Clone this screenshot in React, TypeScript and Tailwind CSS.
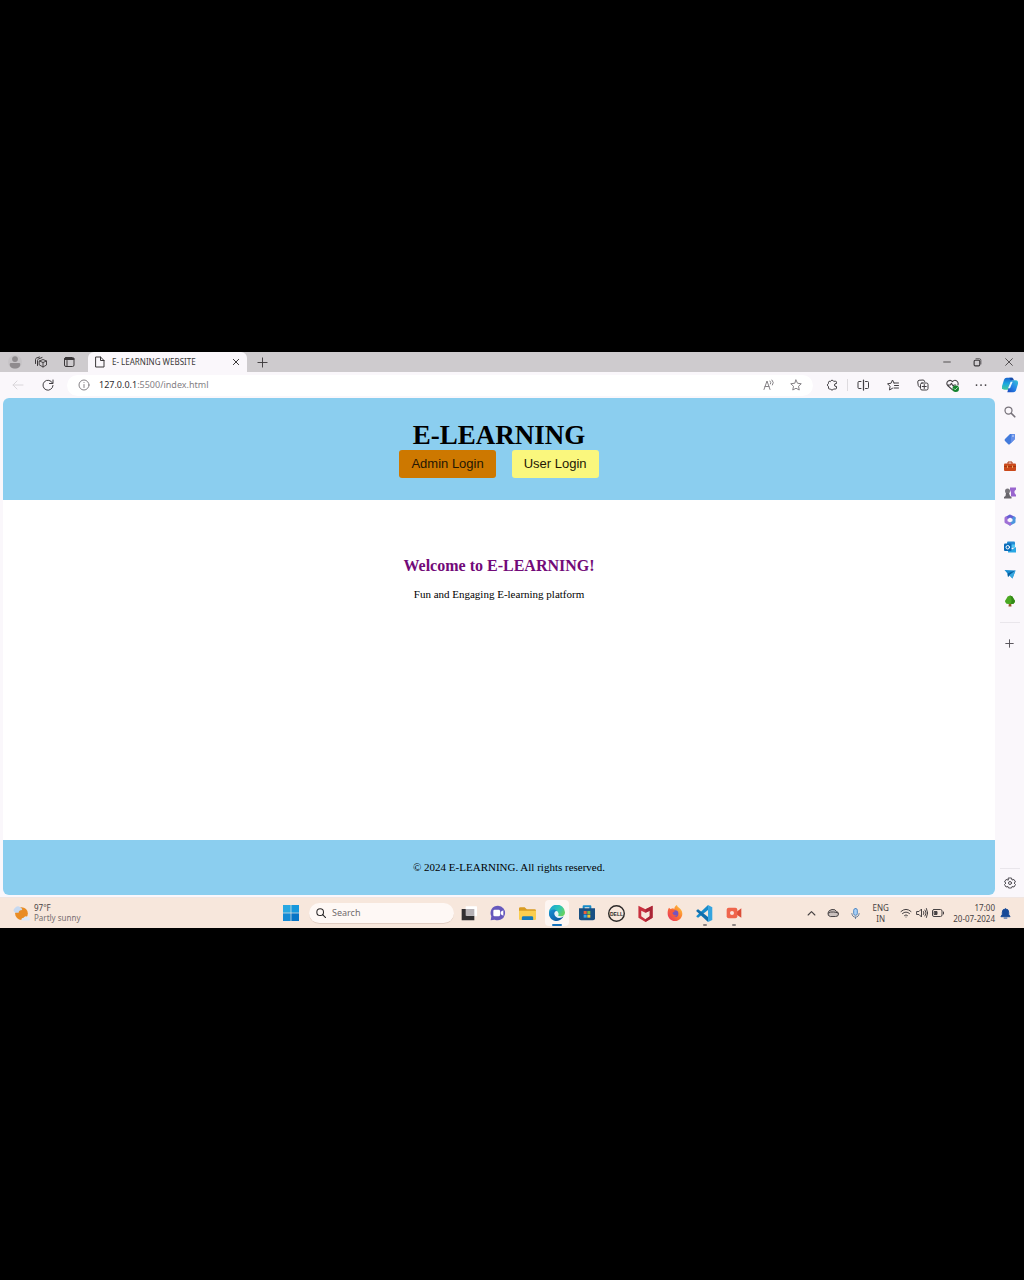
import type { ReactNode } from 'react';

type GlyphProps = { children: ReactNode; className?: string; box?: string };

function Glyph({ children, className = 'size-3', box = '0 0 24 24' }: GlyphProps) {
  return (
    <svg
      aria-hidden="true"
      viewBox={box}
      className={`shrink-0 ${className}`}
      fill="none"
      stroke="currentColor"
      strokeWidth="2"
      strokeLinecap="round"
      strokeLinejoin="round"
    >
      {children}
    </svg>
  );
}

function IconButton({ label, className = '', children }: { label: string; className?: string; children: ReactNode }) {
  return (
    <button type="button" aria-label={label} className={`flex shrink-0 items-center justify-center ${className}`}>
      {children}
    </button>
  );
}

function TabStrip() {
  return (
    <div className="flex h-5 items-stretch bg-[#cecbce] text-[#3a3739]">
      <div className="flex w-[88px] shrink-0 items-center pl-2">
        <IconButton label="Profile" className="w-[14px]">
          <Glyph className="size-[14px]">
            <g fill="#8f8b8e" stroke="none">
              <circle cx="12" cy="12" r="12" fill="#c6c3c6" />
              <circle cx="12" cy="7" r="5" />
              <path d="M3 15.500q0-2 2-2h14q2 0 2 2v1c0 4-4 6.500-9 6.500s-9-2.500-9-6.500z" />
            </g>
          </Glyph>
        </IconButton>
        <IconButton label="Workspaces" className="ml-3 w-[14px]">
          <Glyph>
            <path d="M9 10l7-3 7 3v8l-7 4-7-4zM9 10l7 3 7-3M16 13v9" strokeWidth="1.800" />
            <path d="M5 19V9q0-2 2-3l7-3M1 15V7q0-2 2-3l6-2" />
          </Glyph>
        </IconButton>
        <IconButton label="Tab actions menu" className="ml-[14px] w-[14px]">
          <Glyph>
            <rect x="3" y="3" width="19" height="18" rx="3" />
            <path d="M4 6h17" strokeWidth="4" />
            <path d="M8 9v11" strokeWidth="2" />
          </Glyph>
        </IconButton>
      </div>
      <div className="flex w-[159px] shrink-0 items-center rounded-t-md bg-[#faf7fb] px-[6px]">
        <Glyph className="size-3">
          <path d="M4 2h9l7 7v13H4zM13 2v7h7" />
        </Glyph>
        <span className="ml-[6px] flex-1 whitespace-nowrap text-[8px] leading-3">E- LEARNING WEBSITE</span>
        <IconButton label="Close tab" className="w-[10px]">
          <Glyph className="size-[8px]">
            <path d="M4 4l16 16M20 4L4 20" strokeWidth="3" />
          </Glyph>
        </IconButton>
      </div>
      <IconButton label="New tab" className="ml-2 w-[14px]">
        <Glyph className="size-[11px]">
          <path d="M12 2v20M2 12h20" />
        </Glyph>
      </IconButton>
      <div className="ml-auto flex items-stretch">
        <IconButton label="Minimize" className="w-[30px]">
          <Glyph className="size-[10px]">
            <path d="M4 12h16" />
          </Glyph>
        </IconButton>
        <IconButton label="Restore" className="w-[31px]">
          <Glyph className="size-[9px]">
            <rect x="3" y="6" width="15" height="15" rx="3" strokeWidth="3" />
            <path d="M8 2h9q4 0 4 4v10" />
          </Glyph>
        </IconButton>
        <IconButton label="Close window" className="w-[31px]">
          <Glyph className="size-[10px]">
            <path d="M4 4l16 16M20 4L4 20" />
          </Glyph>
        </IconButton>
      </div>
    </div>
  );
}

function Toolbar() {
  return (
    <div className="flex h-[26px] items-center pl-[11px] text-[#413e42]">
      <IconButton label="Back" className="w-[14px] text-[#d9d6da]">
        <Glyph>
          <path d="M22 12H2M10 4l-8 8 8 8" />
        </Glyph>
      </IconButton>
      <IconButton label="Refresh" className="ml-4 w-[14px]">
        <Glyph>
          <path d="M21 8a10 10 0 1 0 1 5M22 2v7h-7" />
        </Glyph>
      </IconButton>
      <div className="ml-3 flex h-[21px] min-w-0 flex-1 items-center rounded-full bg-white pl-[11px] pr-[10px]">
        <Glyph className="size-3 text-[#858286]">
          <circle cx="12" cy="12" r="10" />
          <path d="M12 11v6M12 7v.1" />
        </Glyph>
        <a href="#page" className="ml-[9px] min-w-0 flex-1 whitespace-nowrap text-[9px] leading-3 text-[#838085]">
          <span className="text-[#2f2c31]">127.0.0.1</span>:5500/index.html
        </a>
        <IconButton label="Read aloud" className="w-[14px] text-[#858286]">
          <Glyph>
            <path d="M2 21L8 4l6 17M4 15h8" />
            <path d="M14 4q3 3 1 6M18 2q5 5 1 10" />
          </Glyph>
        </IconButton>
        <IconButton label="Add to favorites" className="ml-[13px] w-[14px] text-[#858286]">
          <Glyph>
            <path d="M12 2l3 6.500 7.500 1-5.500 5 1.500 7.500-6.500-3.500L5.500 22 7 14.500l-5.500-5 7.500-1z" />
          </Glyph>
        </IconButton>
      </div>
      <div className="ml-[11px] flex shrink-0 items-center">
        <IconButton label="Extensions" className="w-[15px]">
          <Glyph>
            <path d="M9 4.500a3.200 3.200 0 0 1 6 0h4q2 0 2 2V9h-1a3 3 0 0 0 0 6h1v3q0 2-2 2h-4a3.200 3.200 0 0 1-6 0H7q-2 0-2-2v-3a3.200 3.200 0 0 1 0-6V6.500q0-2 2-2z" />
          </Glyph>
        </IconButton>
        <span className="ml-2 h-3 w-px bg-[#dedbdf]" />
        <IconButton label="Split screen" className="w-[30px]">
          <Glyph>
            <path d="M8 5H4Q2 5 2 7v10q0 2 2 2h4M17 5h4q2 0 2 2v10q0 2-2 2h-4" />
            <path d="M13 2v20" strokeWidth="2.500" />
          </Glyph>
        </IconButton>
        <IconButton label="Favorites" className="w-[30px]">
          <Glyph>
            <path d="M14 8L11 2 8 8.500l-7 1 5 5L5 22l6-3.500M14 8h9M15 13h8M14 18h9" />
          </Glyph>
        </IconButton>
        <IconButton label="Collections" className="w-[30px]">
          <Glyph>
            <path d="M5 16q-2-.5-2.500-3L1.500 6Q1.500 3 4 2.500L12 2q3 0 3.500 3" />
            <rect x="7" y="8" width="15" height="14" rx="3" />
            <path d="M14.500 11v8M10.500 15h8" />
          </Glyph>
        </IconButton>
        <IconButton label="Browser essentials" className="w-[29px]">
          <Glyph className="size-[13px]">
            <path d="M12 20L3 12c-5-6 4-13 9-7 5-6 12 0 10 6M3 11h5l2-3 3 5 2-2h3" />
            <circle cx="18" cy="18" r="6" fill="#14832d" stroke="none" />
            <path d="M15 18l2 2 4-4" stroke="#d8f0db" strokeWidth="1.500" />
          </Glyph>
        </IconButton>
        <IconButton label="Settings and more" className="w-[28px]">
          <Glyph>
            <path d="M3 12h.1M12 12h.1M21 12h.1" strokeWidth="3.500" />
          </Glyph>
        </IconButton>
      </div>
    </div>
  );
}

function WebPage() {
  return (
    <div id="page" className="ml-[3px] flex flex-1 flex-col overflow-hidden rounded-md bg-white font-['Liberation_Serif',serif] text-[11px] leading-4 text-black">
      <header className="bg-[#8bceef] py-[22px] text-center">
        <h1 className="text-[27px] font-bold leading-[30px]">E-LEARNING</h1>
        <div className="flex justify-center gap-4 font-['Liberation_Sans',sans-serif] text-[13px] text-[#251704]">
          <button type="button" className="h-7 rounded-[3px] bg-[#cd7800] px-3">Admin Login</button>
          <button type="button" className="h-7 rounded-[3px] bg-[#faf77d] px-3">User Login</button>
        </div>
      </header>
      <main className="min-h-[340px] flex-1 pt-14 text-center">
        <h2 className="text-[16px] font-bold leading-5 text-[#720a79]">Welcome to E-LEARNING!</h2>
        <p className="mt-[10px]">Fun and Engaging E-learning platform</p>
      </main>
      <footer className="bg-[#8bceef] py-5 pl-5 text-center">
        <p className="leading-[15px]">© 2024 E-LEARNING. All rights reserved.</p>
      </footer>
    </div>
  );
}

function CopilotIcon() {
  return (
    <Glyph className="size-4">
      <defs>
        <linearGradient id="cp-a" x1="0" y1="0" x2="0" y2="1">
          <stop stopColor="#1b62cf" />
          <stop offset="0.500" stopColor="#1aa8e0" />
          <stop offset="1" stopColor="#45c99b" />
        </linearGradient>
        <linearGradient id="cp-b" x1="1" y1="0" x2="0" y2="1">
          <stop stopColor="#37c8d5" />
          <stop offset="0.500" stopColor="#2586e8" />
          <stop offset="1" stopColor="#1744bc" />
        </linearGradient>
      </defs>
      <path d="M7 1h9l-5 18H4q-5 0-4-5L3 4q1-3 4-3z" fill="url(#cp-a)" stroke="none" />
      <path d="M17 23H8l5-18h7q5 0 4 5l-3 10q-1 3-4 3z" fill="url(#cp-b)" stroke="none" />
      <path d="M13 7h3l-4 10H9z" fill="#e9faff" stroke="none" />
      <path d="M11 1h4q2 0 3 4h-5z" fill="#164ba9" stroke="none" />
    </Glyph>
  );
}

const sidebarApps: { label: string; icon: ReactNode }[] = [
  {
    label: 'Search',
    icon: (
      <Glyph className="size-3 text-[#77727a]">
        <circle cx="9" cy="9" r="7" strokeWidth="2.500" />
        <path d="M14.500 14.500l7 7" strokeWidth="3.500" />
      </Glyph>
    ),
  },
  {
    label: 'Shopping',
    icon: (
      <Glyph className="size-3">
        <g stroke="none">
          <path d="M12 2h8q2 0 2 2v8L12 22q-2 2-4 0l-6-6q-2-2 0-4z" fill="#437bdc" />
          <path d="M15 2h5q2 0 2 2v8l-8 8V9z" fill="#668fe8" />
          <circle cx="18" cy="6" r="1.500" fill="#e9f0ff" />
        </g>
      </Glyph>
    ),
  },
  {
    label: 'Tools',
    icon: (
      <Glyph className="size-3">
        <path d="M8 7V4h8v3" stroke="#a73713" />
        <rect x="0" y="7" width="24" height="15" rx="2" fill="#ca491b" stroke="none" />
        <path d="M1 13h22" stroke="#a5370f" />
        <path d="M7 12v3M17 12v3" stroke="#f0a560" />
      </Glyph>
    ),
  },
  {
    label: 'Games',
    icon: (
      <Glyph className="size-3">
        <g stroke="none">
          <path d="M12 1h12v4l-3 3v4l3 4v3H14v-8l-2-5z" fill="#9965ce" />
          <circle cx="7" cy="8" r="5" fill="#77747a" />
          <path d="M4 12h6l2 6 3 2v3H0v-3l3-2z" fill="#68656b" />
        </g>
      </Glyph>
    ),
  },
  {
    label: 'Microsoft 365',
    icon: (
      <Glyph className="size-3">
        <path d="M5 8l7-4 8 4" stroke="#655ed3" strokeWidth="6" />
        <path d="M20 8v8l-8 4" stroke="#4b96de" strokeWidth="6" />
        <path d="M12 20l-8-4V8" stroke="#9f70d5" strokeWidth="6" />
      </Glyph>
    ),
  },
  {
    label: 'Outlook',
    icon: (
      <Glyph className="size-3">
        <g stroke="none">
          <rect x="6" y="1" width="16" height="12" rx="2" fill="#258cd4" />
          <path d="M14 7h8v6h-8z" fill="#51c6f3" />
          <path d="M8 12l8 5 8-5v11H8z" fill="#28a7e4" />
          <rect x="0" y="5" width="15" height="15" rx="2" fill="#086bb9" />
        </g>
        <circle cx="7.500" cy="12.500" r="3.500" stroke="#fff" />
      </Glyph>
    ),
  },
  {
    label: 'Drop',
    icon: (
      <Glyph className="size-3">
        <g stroke="none">
          <path d="M1 4l22 1-6 16-6-6-3 3-1-7z" fill="#178bd0" />
          <path d="M23 5L7 11l1 7 3-4z" fill="#075d9c" />
          <path d="M23 5l-12 9 6 7z" fill="#38a7df" />
        </g>
      </Glyph>
    ),
  },
  {
    label: 'E-tree',
    icon: (
      <Glyph className="size-3">
        <g stroke="none">
          <path d="M10 14h4l1 9H9z" fill="#93592c" />
          <path d="M12 1q6 1 7 6 4 4 2 8-1 3-6 3H9q-5 0-6-3-2-4 2-8 1-5 7-6z" fill="#4aa822" />
          <path d="M12 1q6 1 7 6 4 4 2 8-1 3-6 3h-2q5-6-1-17z" fill="#338a16" />
        </g>
      </Glyph>
    ),
  },
];

function Sidebar() {
  return (
    <aside className="flex w-[29px] shrink-0 flex-col items-center pb-2 pt-[5px] text-[#514e54]">
      <IconButton label="Copilot" className="size-4">
        <CopilotIcon />
      </IconButton>
      <div className="mt-[5px] flex flex-col">
        {sidebarApps.map(({ label, icon }) => (
          <IconButton key={label} label={label} className="h-[27px] w-5">
            {icon}
          </IconButton>
        ))}
      </div>
      <span className="mt-2 h-px w-5 bg-[#e9e6eb]" />
      <IconButton label="Customize sidebar" className="mt-[14px] size-3">
        <Glyph className="size-[9px]">
          <path d="M12 2v20M2 12h20" strokeWidth="2.500" />
        </Glyph>
      </IconButton>
      <span className="mt-auto h-px w-5 bg-[#e9e6eb]" />
      <IconButton label="Sidebar settings" className="mt-2 size-3">
        <Glyph>
          <path d="M9 2h6l1 4 4-1 3 5-3 2 3 3-3 5-4-1-1 3H9l-1-3-4 1-3-5 3-3-3-2 3-5 4 1z" />
          <circle cx="12" cy="12" r="3" />
        </Glyph>
      </IconButton>
    </aside>
  );
}

type TaskApp = { label: string; icon: ReactNode; state?: 'active' | 'running' };

const taskApps: TaskApp[] = [
  {
    label: 'Task view',
    icon: (
      <Glyph className="size-4">
        <g stroke="none">
          <rect x="7" y="2" width="17" height="15" rx="1" fill="#fff" />
          <path d="M1 6h7v10h12v7H1z" fill="#302e31" />
          <path d="M7 6h13v10H7z" fill="#b5b1b5" />
        </g>
      </Glyph>
    ),
  },
  {
    label: 'Chat',
    icon: (
      <Glyph className="size-4">
        <g stroke="none">
          <path d="M12 1a11 11 0 1 1-5 21l-6 1 1-6A11 11 0 0 1 12 1z" fill="#6659bd" />
          <rect x="5" y="7" width="10" height="10" rx="2" fill="#fff" />
          <path d="M16 10l4-2v8l-4-2z" fill="#fff" />
        </g>
      </Glyph>
    ),
  },
  {
    label: 'File Explorer',
    icon: (
      <Glyph className="size-[17px]">
        <g stroke="none">
          <path d="M0 5q0-2 2-2h6l3 3h11q2 0 2 2v12H0z" fill="#d99c22" />
          <path d="M0 8h24v11q0 2-2 2H2q-2 0-2-2z" fill="#fbce50" />
          <path d="M4 21v-3q0-2 2-2h12q2 0 2 2v3z" fill="#167bbd" />
        </g>
      </Glyph>
    ),
  },
  {
    label: 'Microsoft Edge',
    state: 'active',
    icon: (
      <Glyph className="size-4">
        <defs>
          <linearGradient id="edge-top" x1="0" y1="0" x2="1" y2="0.500">
            <stop stopColor="#189ed7" />
            <stop offset="0.600" stopColor="#2bc4b9" />
            <stop offset="1" stopColor="#63d164" />
          </linearGradient>
          <linearGradient id="edge-low" x1="0" y1="0" x2="1" y2="1">
            <stop stopColor="#178fd4" />
            <stop offset="1" stopColor="#0c4f98" />
          </linearGradient>
        </defs>
        <g stroke="none">
          <path d="M0 12a12 12 0 0 1 24-1c0 7-8 8-11 5 3-2 1-8-5-7C3 10 1 15 2 18Q0 16 0 12z" fill="url(#edge-top)" />
          <path d="M0 13c0-7 9-8 12-4-6 0-5 9 2 10 3 1 6-1 8-2-2 4-6 7-10 7C5 24 0 19 0 13z" fill="url(#edge-low)" />
          <path d="M12 9c-5 1-4 9 2 10 3 1 6-1 8-2-4 1-9 0-9-3 1-2 1-3-1-5z" fill="#e6f3f8" />
        </g>
      </Glyph>
    ),
  },
  {
    label: 'Microsoft Store',
    icon: (
      <Glyph className="size-4">
        <path d="M7 6V2h10v4" stroke="#168bc9" strokeWidth="3" />
        <path d="M0 5h24v15q0 3-3 3H3q-3 0-3-3z" fill="#195083" stroke="none" />
        <g stroke="none">
          <path d="M7 9h4.500v4.500H7z" fill="#ed613b" />
          <path d="M12.500 9H17v4.500h-4.500z" fill="#78bb43" />
          <path d="M7 14.500h4.500V19H7z" fill="#34a9e7" />
          <path d="M12.500 14.500H17V19h-4.500z" fill="#f5c737" />
        </g>
      </Glyph>
    ),
  },
  {
    label: 'Dell',
    icon: (
      <Glyph className="size-[17px] text-[#2c2928]">
        <circle cx="12" cy="12" r="11" strokeWidth="2" />
        <text x="12" y="15" textAnchor="middle" fontSize="7" fontWeight="700" fill="currentColor" stroke="none" fontFamily="Liberation Sans, sans-serif">
          DELL
        </text>
      </Glyph>
    ),
  },
  {
    label: 'McAfee',
    icon: (
      <Glyph className="size-[17px]">
        <path d="M2 1l10 5 10-5v17l-10 6-10-6zM6 8v8l6 4 6-4V8l-6 3z" fill="#c9303e" fillRule="evenodd" stroke="none" />
        <path d="M12 6l10-5v17l-10 6v-4l6-4V8l-6 3z" fill="#a92536" stroke="none" />
      </Glyph>
    ),
  },
  {
    label: 'Firefox',
    icon: (
      <Glyph className="size-4">
        <defs>
          <linearGradient id="fox" x1="1" y1="0" x2="0" y2="1">
            <stop stopColor="#ffd83b" />
            <stop offset="0.500" stopColor="#fb7133" />
            <stop offset="1" stopColor="#e62b67" />
          </linearGradient>
        </defs>
        <g stroke="none">
          <path d="M3 4l2 2 4-1 2 1c0-3 2-5 4-6 0 4 8 5 8 13 0 6-5 11-11 11S1 19 1 13c0-3 0-6 2-9z" fill="url(#fox)" />
          <circle cx="12" cy="13" r="5" fill="#7654bf" />
          <path d="M5 8q4-2 7 1l-4 3q2 5 7 3-3 5-8 2-4-4-2-9z" fill="#f75a3c" />
        </g>
      </Glyph>
    ),
  },
  {
    label: 'Visual Studio Code',
    state: 'running',
    icon: (
      <Glyph className="size-[17px]">
        <g stroke="none">
          <path d="M17 0L1 15q-1 1 0 2l2 1L17 7z" fill="#178bcb" />
          <path d="M3 6L1 7q-1 1 0 2l16 15v-7z" fill="#106eac" />
          <path d="M17 0l6 3v18l-6 3z" fill="#35a4df" />
        </g>
      </Glyph>
    ),
  },
  {
    label: 'Screen recorder',
    state: 'running',
    icon: (
      <Glyph className="size-4">
        <g stroke="none">
          <path d="M15 11l8-6v14l-8-5z" fill="#db4d37" />
          <rect x="1" y="4" width="16" height="16" rx="3" fill="#ef654c" />
        </g>
        <circle cx="9" cy="12" r="3" fill="#fbe3dc" stroke="none" />
      </Glyph>
    ),
  },
];

function Taskbar() {
  return (
    <footer className="grid h-[31px] grid-cols-[1fr_auto_1fr] items-center border-t border-[#f0e6e3] bg-[#f7e7dc] text-[#474243]">
      <button type="button" className="flex items-center gap-1 pl-[13px] text-left text-[8px] leading-[10px]">
        <Glyph className="size-[17px]">
          <g stroke="none">
            <circle cx="12" cy="12" r="9" fill="#e98c24" />
            <path d="M3 11q-4-3-1-6 4-5 8-2 3 1 3 4-5 0-5 4z" fill="#c6d9f1" />
            <path d="M12 22q-1-4 3-4 2-4 6-1 4 1 2 5z" fill="#dce8f7" />
          </g>
        </Glyph>
        <span>
          97°F
          <br />
          <span className="text-[#777071]">Partly sunny</span>
        </span>
      </button>
      <div className="flex items-center pl-2">
        <IconButton label="Start" className="size-4">
          <Glyph className="size-4">
            <g stroke="none">
              <path d="M0 0h11.500v11.500H0z" fill="#29a8e2" />
              <path d="M12.500 0H24v11.500H12.500z" fill="#1798dd" />
              <path d="M0 12.500h11.500V24H0z" fill="#168bd4" />
              <path d="M12.500 12.500H24V24H12.500z" fill="#0875c6" />
            </g>
          </Glyph>
        </IconButton>
        <label className="ml-[10px] flex h-[21px] w-[145px] items-center gap-[6px] rounded-full border-b border-[#e1cdc2] bg-[#fef8f5] pl-[7px]">
          <Glyph className="size-[10px] text-[#282627]">
            <circle cx="10" cy="10" r="8" strokeWidth="2.500" />
            <path d="M16 16l7 7" strokeWidth="2.500" />
          </Glyph>
          <input
            aria-label="Search"
            type="text"
            placeholder="Search"
            className="w-24 min-w-0 bg-transparent text-[9px] leading-3 outline-none placeholder:text-[#716b6d]"
          />
        </label>
        <div className="flex w-[295px] justify-around">
          {taskApps.map(({ label, icon, state }) => (
            <IconButton
              key={label}
              label={label}
              className={`relative h-[26px] w-6 rounded-sm ${state === 'active' ? 'bg-[#fdf6f2]' : ''}`}
            >
              {icon}
              {state === 'active' && <span className="absolute bottom-0 h-[2px] w-[10px] rounded-full bg-[#1673bd]" />}
              {state === 'running' && <span className="absolute bottom-0 h-[2px] w-1 rounded-full bg-[#8d8583]" />}
            </IconButton>
          ))}
        </div>
      </div>
      <div className="flex items-center justify-end pr-[13px] text-[8px] leading-[11px]">
        <IconButton label="Show hidden icons" className="w-[14px]">
          <Glyph className="size-[9px]">
            <path d="M3 16l9-9 9 9" strokeWidth="3" />
          </Glyph>
        </IconButton>
        <IconButton label="OneDrive" className="ml-2 w-[14px]">
          <Glyph>
            <path d="M6 19q-5-1-4-7 1-6 8-7 7-1 9 4 4 1 4 5 0 5-5 5z" fill="#cbc1be" />
            <path d="M3 12q4-3 10-2 5 0 9 2" />
          </Glyph>
        </IconButton>
        <IconButton label="Microphone" className="ml-2 w-[14px] text-[#607693]">
          <Glyph className="size-[11px]">
            <rect x="8" y="1" width="8" height="15" rx="4" fill="#a9d0f7" stroke="#4882bf" />
            <path d="M4 12q1 8 8 8t8-8M12 20v3" />
          </Glyph>
        </IconButton>
        <button type="button" className="ml-[10px] w-[17px] text-center">
          ENG
          <br />
          IN
        </button>
        <IconButton label="Network, sound and battery" className="ml-[11px] gap-1">
          <Glyph>
            <path d="M2 9q10-9 20 0M5 13q7-6 14 0M9 17q3-3 6 0M12 20v.1" />
          </Glyph>
          <Glyph>
            <path d="M2 9h4l5-5v16l-5-5H2zM15 9q2 3 0 6M18 6q5 6 0 12M21 3q5 9 0 18" />
          </Glyph>
          <Glyph>
            <rect x="1" y="5" width="19" height="14" rx="3" />
            <path d="M5 9h5v6H5z" fill="currentColor" />
            <path d="M23 10v4" />
          </Glyph>
        </IconButton>
        <button type="button" className="ml-[9px] whitespace-nowrap text-right">
          17:00
          <br />
          20-07-2024
        </button>
        <IconButton label="Notifications" className="ml-1 w-3 text-[#174a98]">
          <Glyph className="size-[11px]">
            <path d="M12 2q7 0 7 7v5l3 5H2l3-5V9q0-7 7-7zM9 22h6" fill="currentColor" />
          </Glyph>
        </IconButton>
      </div>
    </footer>
  );
}

export default function App() {
  return (
    <div className="flex min-h-screen flex-col justify-center bg-black font-['Noto_Sans',sans-serif]">
      <div className="bg-[#faf7fb]">
        <TabStrip />
        <div className="flex">
          <div className="flex min-w-0 flex-1 flex-col pb-[2px]">
            <Toolbar />
            <WebPage />
          </div>
          <Sidebar />
        </div>
        <Taskbar />
      </div>
    </div>
  );
}
